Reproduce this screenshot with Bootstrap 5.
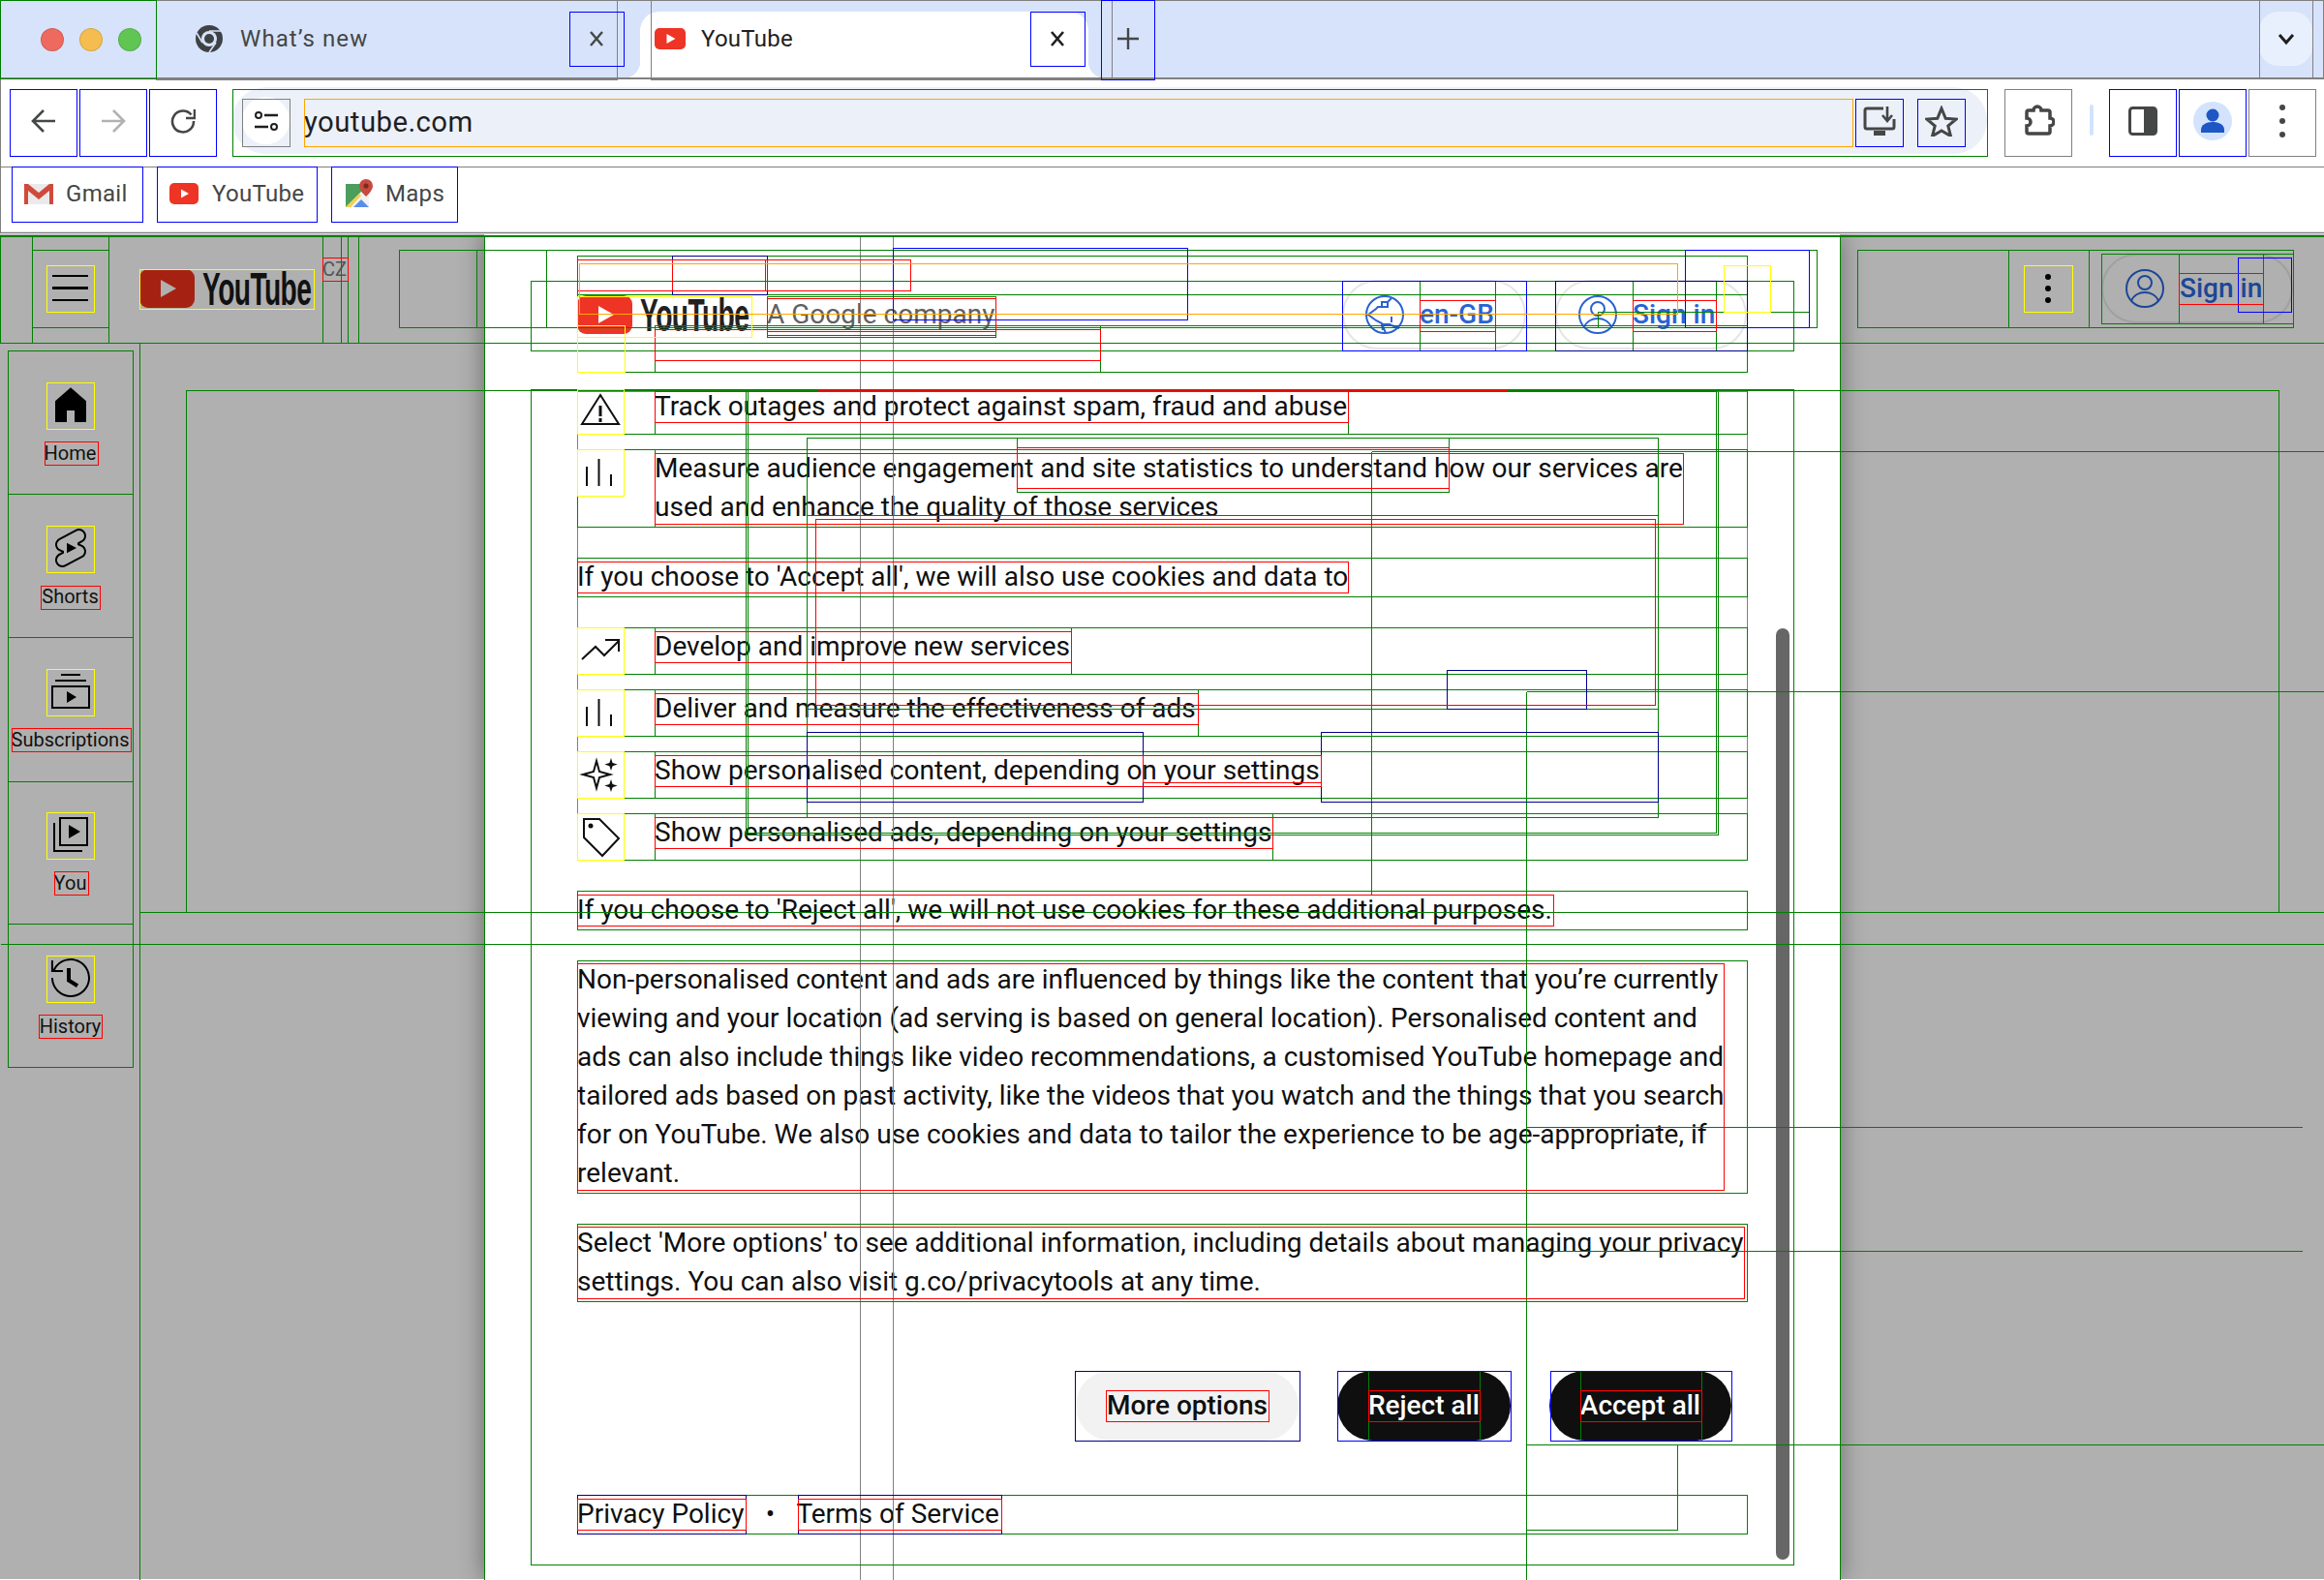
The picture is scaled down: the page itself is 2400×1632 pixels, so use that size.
<!doctype html>
<html lang="en">
<head>
<meta charset="utf-8">
<title>YouTube</title>
<link href="https://cdn.jsdelivr.net/npm/bootstrap@5.3.0/dist/css/bootstrap.min.css" rel="stylesheet">
<style>
html,body{margin:0;height:1632px;width:2400px;overflow:hidden;background:#fff}
body{font-family:Roboto,"Liberation Sans",sans-serif;color:#0f0f0f;position:relative}
svg{display:block;flex:none}
.strip{height:81px;background:#d7e3fb}
.lights{width:161px;height:81px;padding-left:42px;gap:16px}
.dot-l{width:24px;height:24px;border-radius:50%;border:1px solid rgba(0,0,0,.12)}
.tab-a{width:483px;height:69px;margin-top:12px;padding:0 0 13px 41px;gap:18px;font-size:24px;color:#444746;letter-spacing:1.1px}
.tab-b{width:463px;height:69px;margin:12px 0 0 17px;padding:0 4px 13px 15px;gap:16px;font-size:24px;background:#fff;color:#1f1f1f;border-radius:20px 20px 0 0;position:relative;letter-spacing:.25px}
.tab-b::before,.tab-b::after{content:"";position:absolute;bottom:0;width:18px;height:18px}
.tab-b::before{left:-18px;background:radial-gradient(circle at 0 0,transparent 18px,#fff 18.5px)}
.tab-b::after{right:-18px;background:radial-gradient(circle at 100% 0,transparent 18px,#fff 18.5px)}
.tab-x{width:56px;height:56px;margin-left:auto}
.tab-new{width:55px;height:81px;margin:0 0 0 13px;padding-bottom:2px}
.tab-more{width:55px;height:56px;margin:12px 12px 0 0;background:#e9f0fd;border-radius:20px}
.bar-tools{height:91px;padding:10px 9px 0 10px;background:#fff;border-top-left-radius:16px;border-top-right-radius:16px;margin-top:-1px;position:relative}
.tool{width:69px;height:69px;flex:none}
.tool-gap{margin-right:3px}
.omni{width:1812px;height:69px;margin:0 18px 0 17px;padding:10px 23px 10px 10px;background:#ecf0f9;border-radius:35px;flex:none}
.site-ic{width:49px;height:49px;background:#fff;border-radius:50%;flex:none;margin-right:15px}
.omni-t{flex:1;font-size:29.3px;line-height:49px;padding-top:3px;color:#1f1f1f;letter-spacing:.45px}
.omni-b{width:49px;height:49px;flex:none}
.omni-b2{margin-left:15px}
.sep-v{width:4px;height:32px;background:#d3e3fd;border-radius:2px;margin:18px 16px 0 19px;flex:none}
.bar-marks{height:68px;padding:0 0 0 12px;gap:15px;background:#fff}
.mark-b{height:57px;gap:13px;font-size:24px;color:#444746;letter-spacing:.3px;padding-left:13px}
.mark-1{width:135px}
.mark-2{width:165px;gap:14px}
.mark-3{width:130px;padding-left:15px}
.rule-b{height:3px;background:#dfe3e3}
.view{height:1389px;background:#b0b0b0;position:relative;overflow:hidden}
.mast{height:111px}
.burger{width:49px;height:48px;margin-left:48px;gap:10px;padding:0 6px}
.burger i{display:block;height:2.5px;background:#000}
.logo-box{width:180px;height:42px;gap:8px;flex:none}
.logo-mast{margin-left:47px}
.logo-word{display:block;flex:none;width:116px;font:700 49px/42px "Liberation Sans",sans-serif;transform:scaleX(.575);transform-origin:0 50%;letter-spacing:-1px;color:#212121;white-space:nowrap}
.on-gray .mast .logo-word{color:#111}
.cz{font-size:20px;color:#555;margin:-40px 0 0 9px}
.kebab{width:50px;height:48px;gap:6px}
.kebab i{width:6px;height:6px;border-radius:50%;background:#000;display:block}
.pill{height:72px;border:2px solid #e5e5e5;border-radius:36px;gap:12px;padding:0 0 0 18px;font-size:28px;font-weight:500;color:#2a63d2;flex:none;white-space:nowrap}
.pill-g{border-color:#a0a0a0;color:#1c4797;padding-left:19px;margin:0 32px 0 30px;width:198px}
.pill-lang{width:190px}
.pill-sign{width:198px}
.side-nav{width:144px;padding:8px 7px 0 8px}
.side-it{width:129px;height:148px;padding-top:33px;font-size:20px;line-height:28px;color:#111}
.side-it span{margin-top:12px}
.dlg{position:absolute;left:500px;top:0;width:1400px;height:1389px;background:#fff;box-shadow:0 0 24px rgba(0,0,0,.42);padding:47px 96px 0;font-size:28px;line-height:40px;overflow:hidden}
.dlg-head{height:72px;margin-bottom:39px}
.muted-t{color:#606060;margin-left:16px}
.head-end{margin-left:auto;gap:30px}
.c-row{gap:32px;min-height:48px;margin-bottom:16px}
.c-ic{width:48px;height:48px;flex:none}
.c-p{margin:32px 0}
.btn-row{gap:40px;margin:72px 16px 56px 0;justify-content:flex-end}
.btn.act{height:72px;border-radius:36px;padding:0 32px;border:0;font-size:28px;font-weight:500;line-height:72px;white-space:nowrap}
.btn.act-l{background:#f2f2f2;color:#0f0f0f}
.btn.act-d{background:#0f0f0f;color:#fff}
.foot-row{height:40px}
.foot-row a{color:#0f0f0f;text-decoration:none}
.foot-dot{width:54px;text-align:center}
.thumb{position:absolute;right:52px;top:407px;bottom:20px;width:14px;border-radius:7px;background:#666}
.wire{position:absolute;left:0;top:0;width:2400px;height:1632px;pointer-events:none;z-index:5}
.wire path{fill:none;stroke-width:1}
</style>
</head>
<body>
<div class="strip d-flex align-items-start">
  <div class="lights d-flex align-items-center"><span class="dot-l" style="background:#ee6a5f"></span><span class="dot-l" style="background:#f5bd4f"></span><span class="dot-l" style="background:#61c554"></span></div>
  <div class="tab-a d-flex align-items-center">
    <svg width="28" height="28" viewBox="0 0 28 28"><circle cx="14" cy="14" r="14" fill="#3f4245"/><circle cx="14" cy="14" r="8" fill="#d7e3fb"/><circle cx="14" cy="14" r="5" fill="#3f4245"/><path d="M14 6H27M7 18 1 8M21 18l-7 10" stroke="#d7e3fb" stroke-width="1.6"/></svg>
    <span>What’s new</span>
    <span class="tab-x d-flex align-items-center justify-content-center"><svg width="16" height="18" viewBox="0 0 16 18"><path d="M2 2l12 14M14 2 2 16" stroke="#444746" stroke-width="2.4"/></svg></span>
  </div>
  <div class="tab-b d-flex align-items-center">
    <svg width="32" height="22" viewBox="0 0 32 22"><rect width="32" height="22" rx="5" fill="#ee3424"/><path d="M12.500 6l9 5-9 5z" fill="#fff"/></svg>
    <span>YouTube</span>
    <span class="tab-x d-flex align-items-center justify-content-center"><svg width="16" height="18" viewBox="0 0 16 18"><path d="M2 2l12 14M14 2 2 16" stroke="#1f1f1f" stroke-width="2.6"/></svg></span>
  </div>
  <div class="tab-new d-flex align-items-center justify-content-center"><svg width="22" height="22" viewBox="0 0 22 22"><path d="M11 0v22M0 11h22" stroke="#444746" stroke-width="2.4"/></svg></div>
  <div class="flex-grow-1"></div>
  <div class="tab-more d-flex align-items-center justify-content-center"><svg width="18" height="12" viewBox="0 0 18 12"><path d="M2 2l7 8 7-8" fill="none" stroke="#1f1f1f" stroke-width="3"/></svg></div>
</div>

<div class="bar-tools d-flex align-items-start">
  <div class="tool tool-gap d-flex align-items-center justify-content-center"><svg width="26" height="26" viewBox="0 0 26 26"><path d="M25 13H3M13 2 2 13l11 11" fill="none" stroke="#444746" stroke-width="2.6"/></svg></div>
  <div class="tool tool-gap d-flex align-items-center justify-content-center"><svg width="26" height="26" viewBox="0 0 26 26"><path d="M1 13h22M13 2l11 11-11 11" fill="none" stroke="#b2b2b2" stroke-width="2.6"/></svg></div>
  <div class="tool d-flex align-items-center justify-content-center"><svg width="26" height="26" viewBox="0 0 26 26"><path d="M21.500 6.500A11 11 0 1 0 24 13" fill="none" stroke="#444746" stroke-width="2.6"/><path d="M25 1v9h-9" fill="none" stroke="#444746" stroke-width="2.6"/></svg></div>
  <div class="omni d-flex align-items-center">
    <div class="site-ic d-flex align-items-center justify-content-center"><svg width="24" height="20" viewBox="0 0 24 20"><circle cx="4" cy="4" r="3" fill="none" stroke="#1f1f1f" stroke-width="2"/><path d="M10 4h14M0 16h14" stroke="#1f1f1f" stroke-width="2.6"/><circle cx="20" cy="16" r="3" fill="none" stroke="#1f1f1f" stroke-width="2"/></svg></div>
    <div class="omni-t">youtube.com</div>
    <div class="omni-b d-flex align-items-center justify-content-center ms-1"><svg width="34" height="32" viewBox="0 0 34 32"><path d="M21 3H4a2 2 0 0 0-2 2v17a2 2 0 0 0 2 2h26a2 2 0 0 0 2-2V14" fill="none" stroke="#444746" stroke-width="3"/><path d="M11 26h12v5H11z" fill="#444746"/><path d="M25 1v14M20 10l5 6 5-6" fill="none" stroke="#444746" stroke-width="2.6"/></svg></div>
    <div class="omni-b omni-b2 d-flex align-items-center justify-content-center"><svg width="34" height="32" viewBox="0 0 34 32"><path d="M17 3l4.200 10.200 11 .8-8.400 7 2.700 10.600L17 26l-9.500 5.600 2.700-10.600-8.400-7 11-.8z" fill="none" stroke="#444746" stroke-width="3"/></svg></div>
  </div>
  <div class="tool d-flex align-items-center justify-content-center"><svg width="34" height="34" viewBox="0 0 34 34"><path d="M7 6h5a4 4 0 0 1 8 0h7a2 2 0 0 1 2 2v6a4 4 0 0 1 0 8v6a2 2 0 0 1-2 2H7a2 2 0 0 1-2-2v-6a4 4 0 0 0 0-8V8a2 2 0 0 1 2-2z" fill="none" stroke="#444746" stroke-width="3.5"/></svg></div>
  <div class="sep-v"></div>
  <div class="tool tool-gap d-flex align-items-center justify-content-center"><svg width="30" height="30" viewBox="0 0 30 30"><rect x="1.500" y="1.500" width="27" height="27" rx="3" fill="none" stroke="#444746" stroke-width="3"/><rect x="16" y="1.500" width="12" height="27" fill="#444746"/></svg></div>
  <div class="tool tool-gap d-flex align-items-center justify-content-center"><svg width="40" height="40" viewBox="0 0 40 40"><circle cx="20" cy="20" r="20" fill="#d3e3fd"/><circle cx="20" cy="14" r="6.500" fill="#1e56c4"/><path d="M8 32v-3c0-5 5-8 12-8s12 3 12 8v3z" fill="#1e56c4"/></svg></div>
  <div class="tool d-flex align-items-center justify-content-center"><svg width="6" height="34" viewBox="0 0 6 34"><circle cx="3" cy="3" r="3" fill="#444746"/><circle cx="3" cy="17" r="3" fill="#444746"/><circle cx="3" cy="31" r="3" fill="#444746"/></svg></div>
</div>

<div class="bar-marks d-flex align-items-start">
  <div class="mark-b mark-1 d-flex align-items-center"><svg width="30" height="22" viewBox="0 0 30 22"><rect y="1" width="30" height="21" fill="#eaeaea"/><path d="M0 22V1h4l11 9 11-9h4v21h-4V8l-11 9L4 8v14z" fill="#cf4a3c"/></svg><span>Gmail</span></div>
  <div class="mark-b mark-2 d-flex align-items-center"><svg width="30" height="22" viewBox="0 0 30 22"><rect width="30" height="22" rx="5" fill="#ee3424"/><path d="M12 6.500l8 4.500-8 4.500z" fill="#fff"/></svg><span>YouTube</span></div>
  <div class="mark-b mark-3 d-flex align-items-center"><svg width="28" height="29" viewBox="0 0 28 29"><rect y="5" width="24" height="24" fill="#4b9e5c"/><path d="M0 29 24 5v24z" fill="#f2f2f2"/><path d="M0 29l14-14 2 2L5 29z" fill="#f6d047"/><path d="M8 29l8-8 8 8z" fill="#5a8eea"/><path d="M21 0a7 7 0 0 1 7 7c0 5-7 11-7 11s-7-6-7-11a7 7 0 0 1 7-7z" fill="#c84a3c"/><circle cx="21" cy="7" r="2.600" fill="#7a2a22"/></svg><span>Maps</span></div>
</div>
<div class="rule-b"></div>

<div class="view on-gray">
  <div class="mast d-flex align-items-center">
    <div class="burger d-flex flex-column justify-content-center"><i></i><i></i><i></i></div>
    <div class="logo-box logo-mast d-flex align-items-center">
      <svg width="57" height="40" viewBox="0 0 57 40"><rect width="57" height="40" rx="9" fill="#a52213"/><path d="M22 11l16 9-16 9z" fill="#b0b0b0"/></svg>
      <span class="logo-word">YouTube</span>
    </div>
    <span class="cz">CZ</span>
    <div class="ms-auto d-flex align-items-center">
      <div class="kebab d-flex flex-column align-items-center justify-content-center"><i></i><i></i><i></i></div>
      <div class="pill pill-g d-flex align-items-center">
        <svg width="48" height="48" viewBox="0 0 48 48" fill="none" stroke="#1c4797" stroke-width="2"><circle cx="24" cy="24" r="19"/><circle cx="24" cy="18" r="7"/><path d="M10 37c2-6 8-9 14-9s12 3 14 9"/></svg>
        <span>Sign in</span>
      </div>
    </div>
  </div>
  <div class="side-nav d-flex flex-column">
    <div class="side-it d-flex flex-column align-items-center"><svg width="48" height="48" viewBox="0 0 24 24"><path d="M4 21V10.080l8-6.960 8 6.960V21h-6v-6h-4v6H4z"/></svg><span>Home</span></div>
    <div class="side-it d-flex flex-column align-items-center"><svg width="48" height="48" viewBox="0 0 24 24"><path d="M10 14.650v-5.300L15 12l-5 2.650zm7.770-4.330-1.200-.5L18 9.060c1.840-.96 2.530-3.230 1.560-5.060s-3.240-2.530-5.070-1.560L6 6.940c-1.290.68-2.070 2.040-2 3.490.07 1.420.93 2.670 2.220 3.250.03.01 1.200.5 1.200.5L6 14.930c-1.830.97-2.530 3.240-1.560 5.070.97 1.830 3.240 2.530 5.070 1.560l8.500-4.500c1.290-.68 2.060-2.040 1.990-3.490-.07-1.420-.94-2.680-2.230-3.250zm-.23 5.860-8.500 4.500c-1.340.71-3.010.2-3.720-1.140-.71-1.340-.2-3.010 1.140-3.720l2.040-1.080v-1.210l-.69-.28-1.110-.46c-.99-.41-1.650-1.350-1.700-2.410-.05-1.060.52-2.060 1.460-2.560l8.500-4.500c1.340-.71 3.010-.2 3.720 1.140.71 1.340.2 3.010-1.140 3.720L15.500 9.260v1.210l1.800.74c.99.41 1.650 1.350 1.700 2.410.05 1.060-.52 2.060-1.460 2.560z"/></svg><span>Shorts</span></div>
    <div class="side-it d-flex flex-column align-items-center"><svg width="48" height="48" viewBox="0 0 24 24"><path d="M10 18v-6l5 3-5 3zm7-15H7v1h10V3zm3 3H4v1h16V6zm2 3H2v12h20V9zM3 10h18v10H3V10z"/></svg><span>Subscriptions</span></div>
    <div class="side-it d-flex flex-column align-items-center"><svg width="48" height="48" viewBox="0 0 24 24"><path d="m11 7 6 3.500-6 3.500V7zm7 13H4V6H3v15h15v-1zm3-2H6V3h15v15zM7 17h13V4H7v13z"/></svg><span>You</span></div>
    <div class="side-it d-flex flex-column align-items-center"><svg width="48" height="48" viewBox="0 0 24 24"><path d="M14.970 16.950 10 13.870V7h2v5.760l4.030 2.490-1.060 1.700zM22 12c0 5.510-4.490 10-10 10S2 17.510 2 12h1c0 4.960 4.040 9 9 9s9-4.040 9-9-4.040-9-9-9C8.810 3 5.920 4.640 4.280 7.380c-.11.18-.22.37-.31.56L3.940 8H8v1H1.960V3h1v4.740c.04-.09.07-.17.11-.25.11-.22.23-.42.35-.63C5.220 3.860 8.510 2 12 2c5.510 0 10 4.490 10 10z"/></svg><span>History</span></div>
  </div>

  <div class="dlg">
    <div class="dlg-head d-flex align-items-center">
      <div class="logo-box d-flex align-items-center">
        <svg width="57" height="40" viewBox="0 0 57 40"><rect width="57" height="40" rx="9" fill="#ee3424"/><path d="M22 11l16 9-16 9z" fill="#fff"/></svg>
        <span class="logo-word">YouTube</span>
      </div>
      <span class="muted-t">A Google company</span>
      <div class="head-end d-flex">
        <div class="pill pill-lang d-flex align-items-center">
          <svg width="48" height="48" viewBox="0 0 48 48" fill="none" stroke="#2a63d2" stroke-width="2"><circle cx="24" cy="24" r="19"/><path d="M31 7l-4 4h-6v5h-4l-2 2-8 6 8 6 6 3 4 10M22 40l-1-6h8l2 1 8 3"/><path d="M21 16h6v-5M31 26v6"/></svg>
          <span>en-GB</span>
        </div>
        <div class="pill pill-sign d-flex align-items-center">
          <svg width="48" height="48" viewBox="0 0 48 48" fill="none" stroke="#2a63d2" stroke-width="2"><circle cx="24" cy="24" r="19"/><circle cx="24" cy="18" r="7"/><path d="M10 37c2-6 8-9 14-9s12 3 14 9"/></svg>
          <span>Sign in</span>
        </div>
      </div>
    </div>

    <div class="c-row d-flex"><div class="c-ic"><svg width="48" height="48" viewBox="0 0 48 48" fill="none" stroke="#0f0f0f" stroke-width="2"><path d="M24 8 43 38H5z"/><path d="M24 19v11M24 32v4" stroke-width="3"/></svg></div><div>Track outages and protect against spam, fraud and abuse</div></div>
    <div class="c-row d-flex"><div class="c-ic"><svg width="48" height="48" viewBox="0 0 48 48" fill="none" stroke="#0f0f0f" stroke-width="2"><path d="M10 18v20M22.500 10v28M35 26v12"/></svg></div><div>Measure audience engagement and site statistics to understand how our services are used and enhance the quality of those services</div></div>

    <p class="c-p">If you choose to 'Accept all', we will also use cookies and data to</p>

    <div class="c-row d-flex"><div class="c-ic"><svg width="48" height="48" viewBox="0 0 48 48" fill="none" stroke="#0f0f0f" stroke-width="2"><path d="M5 33 19 20l9 9L43 14M29 13h14v12"/></svg></div><div>Develop and improve new services</div></div>
    <div class="c-row d-flex"><div class="c-ic"><svg width="48" height="48" viewBox="0 0 48 48" fill="none" stroke="#0f0f0f" stroke-width="2"><path d="M10 18v20M22.500 10v28M35 26v12"/></svg></div><div>Deliver and measure the effectiveness of ads</div></div>
    <div class="c-row d-flex"><div class="c-ic"><svg width="48" height="48" viewBox="0 0 48 48"><path d="M20 10l3 11 11 3-11 3-3 11-3-11-11-3 11-3z" fill="none" stroke="#0f0f0f" stroke-width="2"/><path d="M35 7l1.600 5 5 1.600-5 1.600L35 20l-1.600-4.800-5-1.600 5-1.600zM35 29l1.600 5 5 1.600-5 1.600L35 42l-1.600-4.800-5-1.600 5-1.600z" fill="#0f0f0f"/></svg></div><div>Show personalised content, depending on your settings</div></div>
    <div class="c-row d-flex"><div class="c-ic"><svg width="48" height="48" viewBox="0 0 48 48" fill="none" stroke="#0f0f0f" stroke-width="2"><path d="M7 6h16l20 20-17 18L7 25z"/><circle cx="14" cy="13" r="2.500" fill="#0f0f0f" stroke="none"/></svg></div><div>Show personalised ads, depending on your settings</div></div>

    <p class="c-p">If you choose to 'Reject all', we will not use cookies for these additional purposes.</p>
    <p class="c-p">Non-personalised content and ads are influenced by things like the content that you’re currently viewing and your location (ad serving is based on general location). Personalised content and ads can also include things like video recommendations, a customised YouTube homepage and tailored ads based on past activity, like the videos that you watch and the things that you search for on YouTube. We also use cookies and data to tailor the experience to be age-appropriate, if relevant.</p>
    <p class="c-p mb-0">Select 'More options' to see additional information, including details about managing your privacy settings. You can also visit g.co/privacytools at any time.</p>

    <div class="btn-row d-flex">
      <button type="button" class="btn act act-l">More options</button>
      <button type="button" class="btn act act-d">Reject all</button>
      <button type="button" class="btn act act-d">Accept all</button>
    </div>
    <div class="foot-row d-flex"><a href="#">Privacy Policy</a><span class="foot-dot">•</span><a href="#">Terms of Service</a></div>
    <div class="thumb"></div>
  </div>
</div>

<svg class="wire" viewBox="0 0 2400 1632" shape-rendering="crispEdges" aria-hidden="true"><g transform="translate(.5 .5)">
<path stroke="#808080" d="M0 0H2399V80H0ZM161 0H637V82H161ZM672 0H1148V82H672ZM2333 0H2388V81H2333ZM0 81H2400V172H0ZM0 172H2400V240H0ZM250 102H299V151H250ZM2070 92H2139V161H2070ZM2322 92H2391V161H2322ZM888 243V1632M922 243V1632M888 243H922M1576 1340V1632M596 404H1804V840H596Z"/>
<path stroke="#008000" d="M0 0H161V81H0ZM240 92H2052V161H240ZM0 243H2400V354H0ZM0 244H2400M33 243H112V354H33ZM33 258H112V338H33ZM333 243H352V354H333ZM359 243H370V354H359ZM412 258H1876V338H412ZM492 258V338M564 258V338M596 264H1804V304H596ZM596 264H1804V384H596ZM548 290H1852V362H548ZM792 306H1028V348H792ZM792 346H1028M676 336H1136V384H676ZM676 336H1804M1466 290H1544V362H1466ZM1686 290H1772V362H1686ZM1650 338V322H1868V338M1740 338V258M596 402H1804V448H596ZM676 402H1392V448H676ZM596 464H1804V544H596ZM676 464V544M596 576H1804V616H596ZM596 648H1804V696H596ZM676 648H1106V696H676ZM596 712H1804V760H596ZM676 712H1237V760H676ZM596 776H1804V824H596ZM676 776H1364V824H676ZM596 840H1804V888H596ZM676 840H1314V888H676ZM596 920H1804V960H596ZM596 992H1804V1232H596ZM596 1264H1804V1344H596ZM596 1544H1804V1584H596ZM548 402H1852V1616H548ZM500 243V1632M1900 243V1632M192 403H2353V942H192ZM144 354V1632M0 975H2400M144 942H2400M8 362H137V1102H8ZM8 510H137M8 658H137M8 807H137M8 954H137M770 402H1774V862H770ZM772 404H1772V860H772ZM833 452H1712V844H833ZM833 532H1712V732H833ZM1050 452H1496V508H1050ZM1180 756V828M1364 756V828M1416 466H2400M1416 466V924M1576 714V1632M1576 714H2400M1576 1164H2377M1576 1292H2377M1576 1492H2400M1732 1492V1580H1576M1142 1416H1310M1142 1488H1310M1413 1416H1528V1488H1413ZM1632 1416H1757V1488H1632ZM1918 258H2368V338H1918ZM2074 258V338M2157 258V338M2170 262H2368V334H2170ZM2250 262V334M2337 262V334"/>
<path stroke="#0000ff" d="M10 92H79V161H10ZM82 92H151V161H82ZM154 92H223V161H154ZM588 12H644V68H588ZM1064 12H1120V68H1064ZM1137 0H1192V82H1137ZM1916 102H1965V151H1916ZM1980 102H2029V151H1980ZM2178 92H2247V161H2178ZM2250 92H2319V161H2250ZM12 172H147V229H12ZM162 172H327V229H162ZM342 172H472V229H342ZM922 256H1226V330H922ZM1386 290H1576V362H1386ZM2311 266H2366V322H2311ZM1740 258H1868V338H1740ZM1381 1416H1560V1488H1381ZM1601 1416H1788V1488H1601Z"/>
<path stroke="#00008b" d="M694 264H792V304H694ZM1606 290H1804V362H1606ZM1110 1416H1342V1488H1110ZM1494 692H1638V732H1494ZM833 756H1180V828H833ZM1364 756H1712V828H1364ZM596 1544H770V1584H596ZM824 1544H1034V1584H824Z"/>
<path stroke="#ff0000" d="M596 268H790V300H596ZM694 268H792V300H694ZM792 268H940V300H792ZM333 266H359V290H333ZM676 340H1136V372H676ZM792 308H1028V342H792ZM1466 310H1544V342H1466ZM1686 310H1772V342H1686ZM2250 282H2337V314H2250ZM46 456H101V480H46ZM42 605H103V629H42ZM12 752H135V776H12ZM56 900H91V924H56ZM40 1048H105V1072H40ZM676 404H1392V436H676ZM676 468H1738V541H676ZM596 580H1392V612H596ZM676 652H1106V684H676ZM676 716H1237V748H676ZM676 780H1364V812H676ZM676 844H1314V876H676ZM596 924H1604V956H596ZM596 995H1780V1229H596ZM596 1267H1801V1341H596ZM1142 1436H1310V1468H1142ZM1413 1436H1528V1468H1413ZM1632 1436H1757V1468H1632ZM596 1548H770V1580H596ZM824 1548H1034V1580H824ZM1050 462H1496V504H1050ZM842 536H1709V728H842ZM1180 780H1364V808H1180ZM844 403H1556"/>
<path stroke="#ffff00" d="M48 274H97V322H48ZM144 278H324V319H144ZM2090 274H2140V322H2090ZM48 395H97V443H48ZM48 543H97V591H48ZM48 691H97V739H48ZM48 839H97V887H48ZM48 987H97V1035H48ZM596 306H776V348H596ZM596 336H645V384H596ZM1780 274H1828V322H1780ZM596 402H644V448H596ZM596 464H644V512H596ZM596 648H644V696H596ZM596 712H644V760H596ZM596 776H644V824H596ZM596 840H644V888H596Z"/>
<path stroke="#ffa500" d="M314 102H1913V151H314ZM598 272H1732V324H598Z"/>
</g></svg>
<script src="https://cdn.jsdelivr.net/npm/bootstrap@5.3.0/dist/js/bootstrap.bundle.min.js"></script>
</body>
</html>
